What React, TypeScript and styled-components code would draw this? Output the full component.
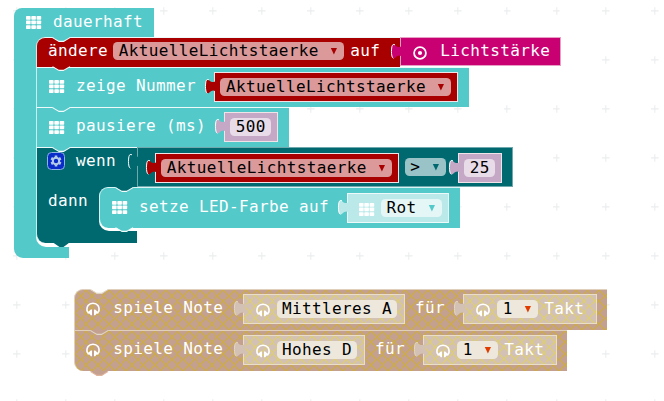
import React from "react";
import styled, { createGlobalStyle } from "styled-components";

const CYAN = "#54c9c9";
const RED = "#a80000";
const TEAL = "#006970";
const MAGENTA = "#c90072";
const MAUVE = "#c5a8c5";
const PALE = "#bbe9e9";
const SAND = "#c3a08f";
const SANDLIGHT = "#d2c1b4";

const GlobalStyle = createGlobalStyle`
  * { box-sizing: border-box; }
  html, body { margin: 0; background: #fff; overflow: hidden; }
  body { font-family: "DejaVu Sans Mono", monospace; font-size: 16px; letter-spacing: 0.368px; }
  svg { display: block; flex: none; }
`;

const Workspace = styled.main`
  position: relative;
  width: 664px;
  height: 401px;
  overflow: hidden;
  background-color: #fff;
  background-size: 49.09px 49.09px;
  background-image: url("data:image/svg+xml,%3Csvg xmlns='http://www.w3.org/2000/svg' width='49.09' height='49.09'%3E%3Cpath d='M16.5 7v7.4M12.8 10.7h7.4' stroke='%23ebedee' stroke-width='1.1'/%3E%3C/svg%3E");
`;

/* A free group of connected blocks on the canvas */
const Group = styled.section<{ $x: number; $y: number }>`
  position: absolute;
  left: ${(p) => p.$x}px;
  top: ${(p) => p.$y}px;
`;

const Header = styled.header`
  display: flex;
  width: 140px;
  height: 29px;
  background: ${CYAN};
  border-radius: 8px 0 0 0;
`;

const LoopBody = styled.div`
  width: 55px;
  padding-left: 22px;
  background: ${CYAN};
`;

const LoopFooter = styled.footer`
  width: 55px;
  height: 10.5px;
  background: ${CYAN};
  border-radius: 0 0 0 9px;
`;

const Stack = styled.div`
  display: flex;
  flex-direction: column;
  width: 530px;
  height: 210px;
  border-bottom-left-radius: 10px;
  background: linear-gradient(#fff, #fff) bottom / 100% 24px no-repeat;
`;

const hatch = (line: string) =>
  `url("data:image/svg+xml,%3Csvg xmlns='http://www.w3.org/2000/svg' width='10' height='10' viewBox='0 0 10 10'%3E%3Cpath d='M-1 -1L11 11M11 -1L-1 11' stroke='%23${line}' stroke-width='1.1'/%3E%3C/svg%3E")`;

const Statement = styled.div<{ $w: number; $h: number; $color: string; $edge?: string; $round?: string; $hatched?: boolean }>`
  position: relative;
  flex: none;
  display: flex;
  align-items: flex-start;
  width: ${(p) => p.$w}px;
  height: ${(p) => p.$h}px;
  background-color: ${(p) => p.$color};
  background-image: ${(p) => (p.$hatched ? hatch("cdab48") : "none")};
  background-size: 11.4px 11.4px;
  border-top: 1.5px solid ${(p) => p.$edge ?? "#eefafa"};
  border-left: 1px solid ${(p) => p.$edge ?? "#c9eeee"};
  border-radius: ${(p) => p.$round ?? "0"};
`;

const Value = styled.div<{ $w: number; $color: string; $ml: number; $mt?: number; $h?: number; $edge?: string; $hatched?: boolean }>`
  position: relative;
  flex: none;
  display: flex;
  align-items: flex-start;
  width: ${(p) => p.$w}px;
  height: ${(p) => p.$h ?? 30}px;
  margin-left: ${(p) => p.$ml}px;
  margin-top: ${(p) => p.$mt ?? 0}px;
  background-color: ${(p) => p.$color};
  background-image: ${(p) => (p.$hatched ? hatch("ddcd74") : "none")};
  background-size: 11.4px 11.4px;
  border: 1px solid ${(p) => p.$edge ?? "#f0e4e8"};
`;

const Label = styled.span<{ $ml?: number; $mt?: number }>`
  flex: none;
  margin-left: ${(p) => p.$ml ?? 0}px;
  margin-top: ${(p) => p.$mt ?? 0}px;
  line-height: 18px;
  color: #fff;
  white-space: pre;
`;

const Field = styled.span<{ $w: number; $ml: number; $mt?: number; $bg: string }>`
  flex: none;
  display: flex;
  justify-content: space-between;
  align-items: center;
  width: ${(p) => p.$w}px;
  height: 18px;
  margin-left: ${(p) => p.$ml}px;
  margin-top: ${(p) => p.$mt ?? 5}px;
  padding: 0 6px 0 5.5px;
  border-radius: 4.5px;
  background: ${(p) => p.$bg};
  color: #000;
  line-height: 18px;
  white-space: pre;
`;

const IconSlot = styled.span<{ $ml: number; $mt: number }>`
  flex: none;
  margin-left: ${(p) => p.$ml}px;
  margin-top: ${(p) => p.$mt}px;
`;

const NotchSvg = styled.svg<{ $top: number; $left?: number }>`
  position: absolute;
  left: ${(p) => p.$left ?? 15}px;
  top: ${(p) => p.$top}px;
  z-index: 1;
`;

const TabSvg = styled.svg`
  position: absolute;
  left: -11px;
  top: 4px;
  z-index: 1;
`;

const IfBlock = styled.div`
  position: relative;
  width: 101px;
  height: 96px;
  background: ${TEAL};
  border-top: 1.5px solid #eefafa;
  border-left: 1px solid #c9eeee;
  border-radius: 0 0 0 9px;
`;

const IfRow = styled.div`
  display: flex;
  align-items: flex-start;
  width: 480px;
  height: 39px;
`;

const ThenRow = styled.div`
  display: flex;
  align-items: flex-start;
  width: 430px;
  height: 45px;
`;

const ThenLabel = styled.div`
  width: 61.5px;
  padding: 4.5px 0 0 11px;
  display: flex;
`;

const ThenBody = styled.div`
  width: 361.5px;
  height: 44px;
  border-radius: 8px 0 0 10px;
  background: linear-gradient(#fff, #fff) bottom right / 100% 24px no-repeat;
`;

const Gear = styled.span`
  flex: none;
  display: grid;
  place-items: center;
  width: 18px;
  height: 18px;
  margin: 4.2px 0 0 10.2px;
  border: 1px solid #8fb4e0;
  border-radius: 4.5px;
  background: #0a2cc8;
`;

function Notch({ fill, line = "#f4fbfb", top = -1.5, left }: { fill: string; line?: string; top?: number; left?: number }) {
  return (
    <NotchSvg $top={top} $left={left} width="19" height="7" viewBox="0 0 19 7">
      <path d="M0 0H18.5L17.5 .5L11.5 5H7.5L1 .5Z" fill={fill} />
      <path d="M.5 .6L7 4.4H11.5L18 .6" fill="none" stroke={line} strokeWidth="1.1" />
    </NotchSvg>
  );
}

function Tab({ fill, line = "#fff" }: { fill: string; line?: string }) {
  return (
    <TabSvg width="13" height="20" viewBox="0 0 13 20">
      <path
        d="M12.3 4.5H10.8C9.6 5.6 7 5 5.4 3.4C4 2 2.3 2.4 1.9 4.6C1.3 8 1.3 11 1.9 14C2.3 16.6 4 17 5.4 15.4C7 13.7 9.6 12.8 10.8 14H12.3Z"
        fill={fill}
      />
      <path
        d="M5 2.9C3.8 2 2.3 2.4 1.9 4.6C1.3 8 1.3 11 1.9 14C2.1 15.2 2.6 16 3.4 16.3"
        fill="none"
        stroke={line}
        strokeWidth="1"
      />
    </TabSvg>
  );
}

function Matrix() {
  return (
    <svg width="16" height="13" viewBox="0 0 16 13" fill="#fff">
      {[0, 4.6, 9.2].map((y) =>
        [0, 5.3, 10.6].map((x) => <rect key={`${x}-${y}`} x={x} y={y} width="4.6" height="3.7" rx=".7" />)
      )}
    </svg>
  );
}

function Headphones() {
  return (
    <svg width="14" height="14" viewBox="0 0 14 14">
      <path d="M1.3 9.6C-.1 4.6 2.8 1.2 7 1.2S14.1 4.6 12.7 9.6" fill="none" stroke="#fff" strokeWidth="1.6" />
      <path d="M.5 8.6L2.6 9.4L4.8 7.4H6V13.2H4.7L3.8 11.8L1.6 11.5ZM13.5 8.6L11.4 9.4L9.2 7.4H8V13.2H9.3L10.2 11.8L12.4 11.5Z" fill="#fff" />
    </svg>
  );
}

function Target() {
  return (
    <svg width="14" height="14" viewBox="0 0 14 14">
      <circle cx="7" cy="7" r="5.9" fill="none" stroke="#fff" strokeWidth="1.8" />
      <circle cx="7" cy="7" r="2.1" fill="#fff" />
    </svg>
  );
}

function Caret({ color }: { color: string }) {
  return (
    <svg width="8" height="8" viewBox="0 0 8 8">
      <path d="M.8 1H7L3.9 7.5Z" fill={color} />
    </svg>
  );
}

function Cog() {
  return (
    <svg width="12" height="12" viewBox="-6 -6 12 12">
      {[0, 60, 120, 180, 240, 300].map((a) => (
        <rect key={a} x="-1.3" y="-5.5" width="2.6" height="3" fill="#b4cbe8" transform={`rotate(${a})`} />
      ))}
      <circle r="3.2" fill="none" stroke="#b4cbe8" strokeWidth="2" />
    </svg>
  );
}

function Variable({ ml, mt }: { ml: number; mt: number }) {
  return (
    <Value $w={244} $color={RED} $ml={ml} $mt={mt}>
      <Tab fill={RED} />
      <Field $w={231} $ml={5} $bg="#db9999">
        AktuelleLichtstaerke
        <Caret color={RED} />
      </Field>
    </Value>
  );
}

function PlayNote({ note, w, noteW, first }: { note: string; w: number; noteW: number; first?: boolean }) {
  return (
    <Statement $w={w} $h={41} $color={SAND} $edge="#dfcfbb" $hatched $round={first ? "9px 0 0 0" : "0 0 0 9px"}>
      <Notch fill={first ? "#fff" : SAND} line="#e2d6c4" />
      <IconSlot $ml={11} $mt={11.5}><Headphones /></IconSlot>
      <Label $ml={13} $mt={8.5}>spiele Note</Label>
      <Value $w={noteW + 42} $color={SANDLIGHT} $edge="#eadfc6" $ml={19.3} $mt={4} $hatched>
        <Tab fill={SANDLIGHT} line="#e5d8bd" />
        <IconSlot $ml={12} $mt={7.5}><Headphones /></IconSlot>
        <Field $w={noteW} $ml={7} $mt={4.5} $bg="#ede7dc">{note}</Field>
      </Value>
      <Label $ml={10.5} $mt={8.5}>für</Label>
      <Value $w={133.5} $color={SANDLIGHT} $edge="#eadfc6" $ml={18} $mt={4} $hatched>
        <Tab fill={SANDLIGHT} line="#e5d8bd" />
        <IconSlot $ml={12} $mt={7.5}><Headphones /></IconSlot>
        <Field $w={41} $ml={7} $mt={4.5} $bg="#ede7dc">1<Caret color="#e03c00" /></Field>
        <Label $ml={6} $mt={4.5}>Takt</Label>
      </Value>
    </Statement>
  );
}

export default function App() {
  return (
    <>
      <GlobalStyle />
      <Workspace>
        <Group $x={14} $y={8}>
          <Header>
            <IconSlot $ml={12} $mt={8}><Matrix /></IconSlot>
            <Label $ml={11} $mt={5}>dauerhaft</Label>
          </Header>
          <LoopBody>
            <Stack>
              <Statement $w={364} $h={29.5} $color={RED} $round="9px 0 0 0">
                <Notch fill={CYAN} />
                <Label $ml={11} $mt={3.9}>ändere</Label>
                <Field $w={231} $ml={5.3} $mt={4} $bg="#db9999">AktuelleLichtstaerke<Caret color={RED} /></Field>
                <Label $ml={6} $mt={3.9}>auf</Label>
                <Value $w={161} $h={29} $color={MAGENTA} $edge="#e7a0c4" $ml={19.8} $mt={-1}>
                  <Tab fill={MAGENTA} />
                  <IconSlot $ml={12} $mt={8}><Target /></IconSlot>
                  <Label $ml={13} $mt={4.4}>Lichtstärke</Label>
                </Value>
              </Statement>
              <Statement $w={433} $h={40.5} $color={CYAN}>
                <Notch fill={RED} />
                <IconSlot $ml={12} $mt={12.5}><Matrix /></IconSlot>
                <Label $ml={11} $mt={9}>zeige Nummer</Label>
                <Variable ml={18.4} mt={4.5} />
              </Statement>
              <Statement $w={252.5} $h={40} $color={CYAN}>
                <Notch fill={CYAN} />
                <IconSlot $ml={12} $mt={12.5}><Matrix /></IconSlot>
                <Label $ml={11} $mt={9}>pausiere (ms)</Label>
                <Value $w={54} $color={MAUVE} $ml={17.7} $mt={4}>
                  <Tab fill={MAUVE} />
                  <Field $w={41} $ml={5.5} $bg="#e7dce8">500</Field>
                </Value>
              </Statement>
              <IfBlock>
                <Notch fill={CYAN} />
                <IfRow>
                  <Gear><Cog /></Gear>
                  <Label $ml={10.8} $mt={4}>wenn</Label>
                  <Value $w={376} $h={40} $color={TEAL} $edge="#6fa9ad" $ml={21} $mt={-1}>
                    <Tab fill={TEAL} />
                    <Variable ml={17.3} mt={4.5} />
                    <Field $w={41} $ml={5.5} $mt={9.5} $bg="#99c3c6">&gt;<Caret color={TEAL} /></Field>
                    <Value $w={44} $color={MAUVE} $ml={12} $mt={4.5}>
                      <Tab fill={MAUVE} />
                      <Field $w={31} $ml={5.5} $bg="#e7dce8">25</Field>
                    </Value>
                  </Value>
                </IfRow>
                <ThenRow>
                  <ThenLabel><Label>dann</Label></ThenLabel>
                  <ThenBody>
                    <Statement $w={361.5} $h={41} $color={CYAN} $edge="#d9f5f5" $round="9px 0 0 9px">
                      <Notch fill={TEAL} />
                      <Notch fill={CYAN} top={39} />
                      <IconSlot $ml={12} $mt={12.5}><Matrix /></IconSlot>
                      <Label $ml={11.5} $mt={9.5}>setze LED-Farbe auf</Label>
                      <Value $w={102.5} $color={PALE} $edge="#eefafa" $ml={17.5} $mt={5}>
                        <Tab fill={PALE} />
                        <IconSlot $ml={11.5} $mt={8.5}><Matrix /></IconSlot>
                        <Field $w={61} $ml={6} $bg="#e4f6f6">Rot<Caret color={CYAN} /></Field>
                      </Value>
                    </Statement>
                  </ThenBody>
                </ThenRow>
                <Notch fill={TEAL} line="none" top={94} />
              </IfBlock>
            </Stack>
          </LoopBody>
          <LoopFooter />
        </Group>
        <Group $x={74.3} $y={289}>
          <PlayNote first note="Mittleres A" w={533} noteW={120} />
          <PlayNote note="Hohes D" w={493} noteW={80} />
          <Notch fill={SAND} line="#e0b49c" top={81.5} left={16} />
        </Group>
      </Workspace>
    </>
  );
}
